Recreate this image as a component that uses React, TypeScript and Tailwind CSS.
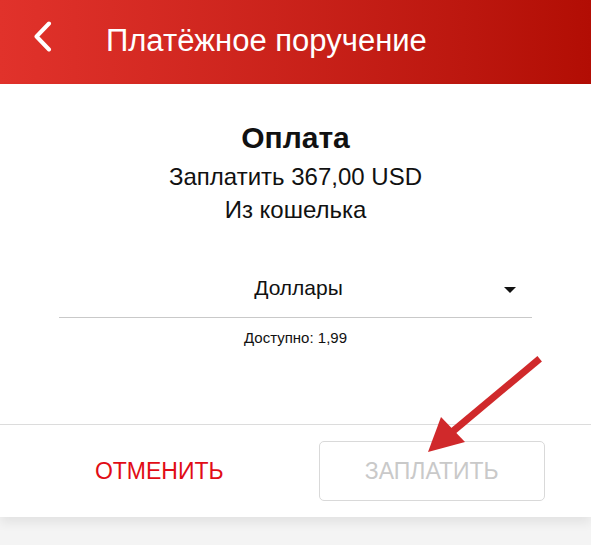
import React from "react";

const Chevron = () => (
  <svg width="20" height="31" viewBox="0 0 20 31" fill="none" className="block shrink-0">
    <path d="M16 2.5 L3.5 15.5 L16 28.5" stroke="white" strokeWidth="4" strokeLinecap="round" strokeLinejoin="round" />
  </svg>
);

const Arrow = () => (
  <svg width="591" height="545" className="pointer-events-none absolute left-0 top-0" viewBox="0 0 591 545">
    <line x1="537" y1="361" x2="452" y2="432" stroke="#d0292b" strokeWidth="7" strokeLinecap="square" />
    <polygon points="428,452 441,417 465,442" fill="#d0292b" />
  </svg>
);

export default function App() {
  return (
    <div className="relative flex h-[545px] w-[591px] flex-col overflow-hidden bg-[#f4f4f4] font-['Liberation_Sans',Arial,sans-serif]">
      {/* header */}
      <div className="flex h-[84px] shrink-0 items-start bg-gradient-to-r from-[#e1322b] to-[#b20d04] pl-[33px] pt-[21px]">
        <Chevron />
        <h1 className="ml-[53px] mt-[2px] text-[31px] font-normal leading-[36px] text-white">
          Платёжное поручение
        </h1>
      </div>

      <div className="bg-white shadow-[0_6px_10px_rgba(0,0,0,0.07)]">
        <div className="h-[340px] pt-[38px] text-center text-[#111]">
          <div className="text-[30px] font-bold leading-[32px]">Оплата</div>
          <div className="mt-[8px] text-[24px] leading-[30px]">Заплатить 367,00 USD</div>
          <div className="mt-[3px] text-[24px] leading-[30px]">Из кошелька</div>

          <div className="relative mx-[59px] mt-[48px] border-b border-[#c9c9c9] pb-[14px] pl-[6px] text-[21px] leading-[30px]">
            Доллары
            <span className="absolute right-[16px] top-[14px] h-0 w-0 border-x-[6px] border-t-[6px] border-x-transparent border-t-[#111]" />
          </div>
          <div className="mt-[10px] text-[15px] leading-[20px]">Доступно: 1,99</div>
        </div>

        <div className="flex gap-[46px] border-t-[1.5px] border-[#dcdcdc] px-[46px] pb-[16px] pt-[16px]">
          <button className="flex h-[60px] w-[227px] items-center justify-center text-[23px] text-[#e10c16]">
            ОТМЕНИТЬ
          </button>
          <button className="flex h-[60px] w-[227px] items-center justify-center rounded-[5px] border-[1.5px] border-[#d9d9d9] text-[23px] text-[#c9c9c9]">
            ЗАПЛАТИТЬ
          </button>
        </div>
      </div>

      <Arrow />
    </div>
  );
}
